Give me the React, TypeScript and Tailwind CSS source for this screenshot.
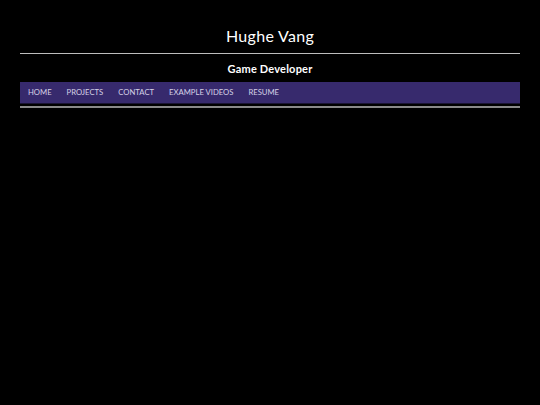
import React from "react";

export default function App() {
  const items = ["HOME", "PROJECTS", "CONTACT", "EXAMPLE VIDEOS", "RESUME"];
  return (
    <div className="min-h-[405px] w-full bg-black text-white" style={{ fontFamily: "Lato, 'Noto Sans', sans-serif" }}>
      <div className="px-[20px] pt-[26px]">
        <h1 className="text-center text-[16px] leading-[20px] font-normal tracking-[0.3px]">Hughe Vang</h1>
        <div className="mt-[7px] h-px bg-[#bdbdbd]" />
        <h2 className="mt-[8px] text-center text-[11px] leading-[14px] font-bold tracking-[0.2px]">Game Developer</h2>
        <nav className="mt-[6px] flex h-[21px] items-center gap-[15px] bg-[#372a6d] pl-[8px] shadow-[0_1px_0_#1a1433]">
          {items.map((t) => (
            <span key={t} className="text-[7.7px] leading-none text-[#d6d2e6]">{t}</span>
          ))}
        </nav>
        <div className="mt-[3px] h-[2px] bg-[#8a8a8a]" />
      </div>
    </div>
  );
}
